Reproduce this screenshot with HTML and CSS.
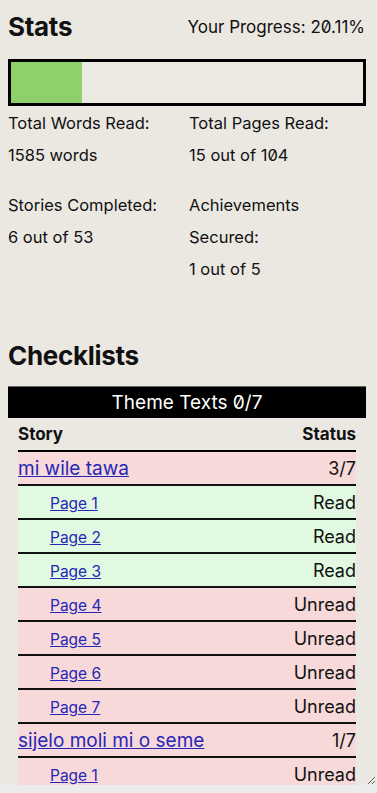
FILE: index.html
```html
<!DOCTYPE html>
<html lang="en">
<head>
    <meta charset="UTF-8">
    <meta name="viewport" content="width=device-width, initial-scale=1.0">
    <title>Stats</title>
    <link rel="stylesheet" href="styles.css">
</head>
<body>
    <div class="frame">
        <section class="stats">
            <div class="stats-head">
                <h2>Stats</h2>
                <span class="progress-label">Your Progress: 20.11%</span>
            </div>
            <div class="progress">
                <div class="progress-fill" style="width: 20.11%"></div>
            </div>
            <div class="stat-grid">
                <div class="stat">
                    <p>Total Words Read:</p>
                    <p>1585 words</p>
                </div>
                <div class="stat">
                    <p>Total Pages Read:</p>
                    <p>15 out of 104</p>
                </div>
                <div class="stat">
                    <p>Stories Completed:</p>
                    <p>6 out of 53</p>
                </div>
                <div class="stat">
                    <p>Achievements Secured:</p>
                    <p>1 out of 5</p>
                </div>
            </div>
        </section>

        <section class="checklists">
            <h2>Checklists</h2>
            <div class="checklist">
                <div class="checklist-title">Theme Texts 0/7</div>
                <table class="check-table">
                    <thead>
                        <tr><th>Story</th><th class="right">Status</th></tr>
                    </thead>
                    <tbody>
                        <tr class="story unread"><td><a href="javascript:;">mi wile tawa</a></td><td class="right">3/7</td></tr>
                        <tr class="page read"><td><a href="javascript:;">Page 1</a></td><td class="right">Read</td></tr>
                        <tr class="page read"><td><a href="javascript:;">Page 2</a></td><td class="right">Read</td></tr>
                        <tr class="page read"><td><a href="javascript:;">Page 3</a></td><td class="right">Read</td></tr>
                        <tr class="page unread"><td><a href="javascript:;">Page 4</a></td><td class="right">Unread</td></tr>
                        <tr class="page unread"><td><a href="javascript:;">Page 5</a></td><td class="right">Unread</td></tr>
                        <tr class="page unread"><td><a href="javascript:;">Page 6</a></td><td class="right">Unread</td></tr>
                        <tr class="page unread"><td><a href="javascript:;">Page 7</a></td><td class="right">Unread</td></tr>
                        <tr class="story unread"><td><a href="javascript:;">sijelo moli mi o seme</a></td><td class="right">1/7</td></tr>
                        <tr class="page unread"><td><a href="javascript:;">Page 1</a></td><td class="right">Unread</td></tr>
                    </tbody>
                </table>
            </div>
        </section>
    </div>
</body>
</html>
```

FILE: styles.css
```css
*{
    padding: 0;
    margin: 0;
    box-sizing: border-box;
}
html,body{
    background-color: #ececec;
}
body{
    font-family: Inter, "Noto Sans", sans-serif;
    font-feature-settings: "zero";
    color: #111;
}
.frame{
    width: 376px;
    height: 785px;
    overflow: hidden;
    resize: both;
    background-color: #ebe8e2;
    padding: 8px 10px 0 8px;
}
h2{
    font-size: 26px;
    font-weight: 700;
    letter-spacing: -0.3px;
    line-height: 34px;
}
.stats-head{
    display: flex;
    justify-content: space-between;
    align-items: center;
    margin-top: 2px;
}
.progress-label{
    font-size: 17px;
    padding-right: 1px;
}
.progress{
    margin-top: 15px;
    height: 47px;
    border: 3px solid #000;
    background-color: #ece9e3;
}
.progress-fill{
    height: 100%;
    background-color: #8ed16b;
}
.stat-grid{
    display: grid;
    grid-template-columns: 181px 1fr;
    row-gap: 18px;
    margin-top: 1px;
}
.stat p{
    font-size: 16.5px;
    line-height: 32px;
}
.checklists{
    margin-top: 54px;
}
.checklist{
    margin-top: 13px;
}
.checklist-title{
    background-color: #000;
    color: #fff;
    text-align: center;
    font-size: 19px;
    line-height: 31px;
    border-top: 1px solid #666;
}
.check-table{
    width: 338px;
    margin: 0 10px;
    border-collapse: collapse;
}
.check-table th{
    font-size: 17px;
    font-weight: 700;
    text-align: left;
    height: 33px;
    border-bottom: 2px solid #000;
}
.check-table td{
    height: 34px;
    border-bottom: 2px solid #111;
    font-size: 18px;
}
.check-table .right{
    text-align: right;
}
.check-table a{
    color: #2626b8;
}
.check-table .story a{
    font-size: 19px;
}
.check-table .page td:first-child{
    padding-left: 32px;
}
.check-table .page a{
    font-size: 15.5px;
}
.check-table .read{
    background-color: #e0f9e0;
}
.check-table .unread{
    background-color: #f7d9d9;
}
```
